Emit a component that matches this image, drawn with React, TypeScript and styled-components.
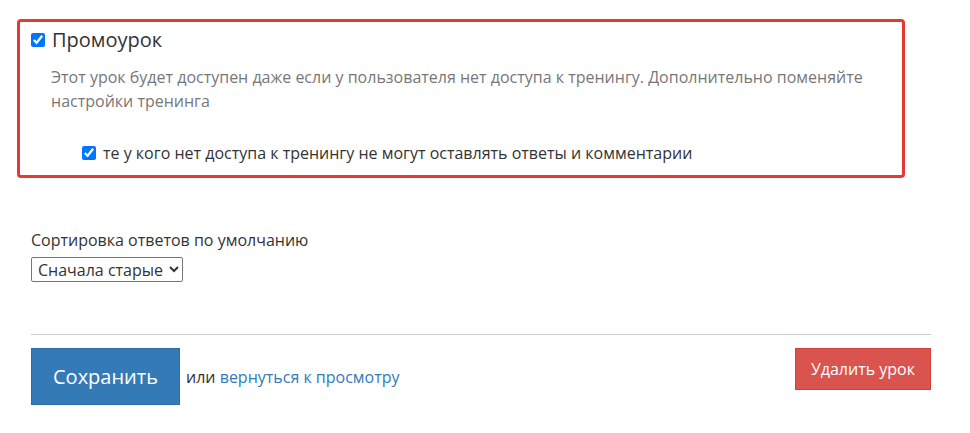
import React, {useState} from "react";
import styled, {createGlobalStyle} from 'styled-components';

const App = () => {
  const [promo, setPromo] = useState(true);
  const [noComments, setNoComments] = useState(true);
  const [sort, setSort] = useState("old");

  return (
    <Page>
      <GlobalStyle />
      <PromoBox>
        <PromoHeader>
          <Check
            type="checkbox"
            checked={promo}
            onChange={(e) => setPromo(e.target.checked)}
          />
          <PromoTitle>Промоурок</PromoTitle>
        </PromoHeader>
        <Hint>
          Этот урок будет доступен даже если у пользователя нет доступа к тренингу. Дополнительно поменяйте
          настройки тренинга
        </Hint>
        <SubOption>
          <Check
            type="checkbox"
            checked={noComments}
            onChange={(e) => setNoComments(e.target.checked)}
          />
          <span>те у кого нет доступа к тренингу не могут оставлять ответы и комментарии</span>
        </SubOption>
      </PromoBox>

      <Field>
        <FieldLabel>Сортировка ответов по умолчанию</FieldLabel>
        <Select value={sort} onChange={(e) => setSort(e.target.value)}>
          <option value="old">Сначала старые</option>
          <option value="new">Сначала новые</option>
        </Select>
      </Field>

      <Divider />

      <Actions>
        <SaveGroup>
          <Button variant="primary" size="large">Сохранить</Button>
          <Or>или <Link href="#">вернуться к просмотру</Link></Or>
        </SaveGroup>
        <Button variant="danger" size="normal">Удалить урок</Button>
      </Actions>
    </Page>
  );
};

export default App;

const font = `"Open Sans", "Liberation Sans", Arial, sans-serif`;

const GlobalStyle = createGlobalStyle`
  body {
    margin: 0;
    background: #fff;
    font-family: ${font};
    color: #333;
  }
`;

const Page = styled.div`
  width: 900px;
  padding: 19px 0 0 31px;
`

const PromoBox = styled.div`
  box-sizing: border-box;
  margin-left: -14px;
  width: 888px;
  border: 3px solid #e53935;
  border-radius: 4px;
  padding: 7px 8px 12px 11px;
`

const PromoHeader = styled.label`
  display: flex;
  align-items: center;
  gap: 7px;
  height: 22px;
`

const Check = styled.input`
  width: 14px;
  height: 14px;
  margin: 0;
  accent-color: #0075ff;
`

const PromoTitle = styled.span`
  font-size: 20px;
  line-height: 22px;
  color: #333;
`

const Hint = styled.p`
  margin: 14px 0 0 20px;
  font-size: 16px;
  line-height: 24px;
  color: #777;
`

const SubOption = styled.label`
  display: flex;
  align-items: center;
  gap: 7px;
  margin: 30px 0 0 51px;
  height: 20px;
  font-size: 16px;
  color: #333;
`

const Field = styled.div`
  margin-top: 52px;
  display: flex;
  flex-direction: column;
  align-items: flex-start;
  gap: 7px;
`

const FieldLabel = styled.label`
  font-size: 16px;
  line-height: 20px;
  color: #333;
`

const Select = styled.select`
  box-sizing: border-box;
  height: 25px;
  font-family: ${font};
  font-size: 16px;
  color: #333;
  border: 1px solid #767676;
  border-radius: 2px;
  background: #fff;
  padding: 0 2px;
`

const Divider = styled.hr`
  margin: 52px 0 13px;
  border: 0;
  border-top: 1px solid #ccc;
`

const Actions = styled.div`
  display: flex;
  justify-content: space-between;
  align-items: flex-start;
`

const SaveGroup = styled.div`
  display: flex;
  align-items: center;
  gap: 6px;
`

const Button = styled.button<{variant: "primary" | "danger"; size: "large" | "normal"}>`
  font-family: ${font};
  color: #fff;
  cursor: pointer;
  border-radius: 0;
  border: 1px solid ${p => p.variant === "primary" ? "#2e6da4" : "#d43f3a"};
  background: ${p => p.variant === "primary" ? "#337ab7" : "#d9534f"};
  font-size: ${p => p.size === "large" ? "20px" : "16px"};
  height: ${p => p.size === "large" ? "57px" : "42px"};
  padding: ${p => p.size === "large" ? "0 21px" : "0 15px"};
`

const Or = styled.span`
  font-size: 16px;
  color: #333;
`

const Link = styled.a`
  color: #337ab7;
  text-decoration: none;
`
